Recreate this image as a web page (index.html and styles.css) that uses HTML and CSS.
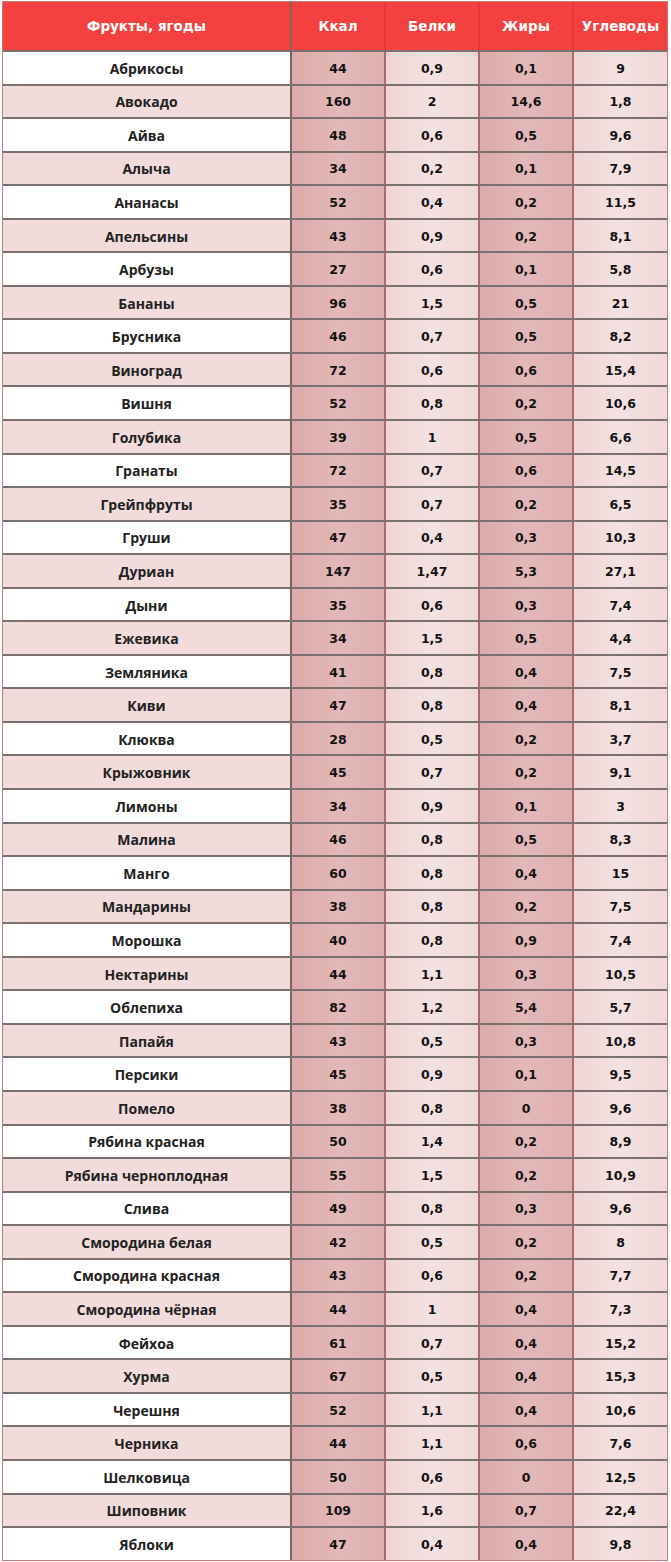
FILE: index.html
```html
<!DOCTYPE html>
<html lang="ru">
<head>
<meta charset="utf-8">
<title>Калорийность фруктов и ягод</title>
<link rel="stylesheet" href="styles.css">
</head>
<body>
<div class="table">
  <div class="row head">
    <div class="cell name">Фрукты, ягоды</div>
    <div class="cell">Ккал</div>
    <div class="cell">Белки</div>
    <div class="cell">Жиры</div>
    <div class="cell">Углеводы</div>
  </div>
  <div class="row"><div class="cell name">Абрикосы</div><div class="cell dark">44</div><div class="cell light">0,9</div><div class="cell dark">0,1</div><div class="cell light">9</div></div>
  <div class="row"><div class="cell name">Авокадо</div><div class="cell dark">160</div><div class="cell light">2</div><div class="cell dark">14,6</div><div class="cell light">1,8</div></div>
  <div class="row"><div class="cell name">Айва</div><div class="cell dark">48</div><div class="cell light">0,6</div><div class="cell dark">0,5</div><div class="cell light">9,6</div></div>
  <div class="row"><div class="cell name">Алыча</div><div class="cell dark">34</div><div class="cell light">0,2</div><div class="cell dark">0,1</div><div class="cell light">7,9</div></div>
  <div class="row"><div class="cell name">Ананасы</div><div class="cell dark">52</div><div class="cell light">0,4</div><div class="cell dark">0,2</div><div class="cell light">11,5</div></div>
  <div class="row"><div class="cell name">Апельсины</div><div class="cell dark">43</div><div class="cell light">0,9</div><div class="cell dark">0,2</div><div class="cell light">8,1</div></div>
  <div class="row"><div class="cell name">Арбузы</div><div class="cell dark">27</div><div class="cell light">0,6</div><div class="cell dark">0,1</div><div class="cell light">5,8</div></div>
  <div class="row"><div class="cell name">Бананы</div><div class="cell dark">96</div><div class="cell light">1,5</div><div class="cell dark">0,5</div><div class="cell light">21</div></div>
  <div class="row"><div class="cell name">Брусника</div><div class="cell dark">46</div><div class="cell light">0,7</div><div class="cell dark">0,5</div><div class="cell light">8,2</div></div>
  <div class="row"><div class="cell name">Виноград</div><div class="cell dark">72</div><div class="cell light">0,6</div><div class="cell dark">0,6</div><div class="cell light">15,4</div></div>
  <div class="row"><div class="cell name">Вишня</div><div class="cell dark">52</div><div class="cell light">0,8</div><div class="cell dark">0,2</div><div class="cell light">10,6</div></div>
  <div class="row"><div class="cell name">Голубика</div><div class="cell dark">39</div><div class="cell light">1</div><div class="cell dark">0,5</div><div class="cell light">6,6</div></div>
  <div class="row"><div class="cell name">Гранаты</div><div class="cell dark">72</div><div class="cell light">0,7</div><div class="cell dark">0,6</div><div class="cell light">14,5</div></div>
  <div class="row"><div class="cell name">Грейпфруты</div><div class="cell dark">35</div><div class="cell light">0,7</div><div class="cell dark">0,2</div><div class="cell light">6,5</div></div>
  <div class="row"><div class="cell name">Груши</div><div class="cell dark">47</div><div class="cell light">0,4</div><div class="cell dark">0,3</div><div class="cell light">10,3</div></div>
  <div class="row"><div class="cell name">Дуриан</div><div class="cell dark">147</div><div class="cell light">1,47</div><div class="cell dark">5,3</div><div class="cell light">27,1</div></div>
  <div class="row"><div class="cell name">Дыни</div><div class="cell dark">35</div><div class="cell light">0,6</div><div class="cell dark">0,3</div><div class="cell light">7,4</div></div>
  <div class="row"><div class="cell name">Ежевика</div><div class="cell dark">34</div><div class="cell light">1,5</div><div class="cell dark">0,5</div><div class="cell light">4,4</div></div>
  <div class="row"><div class="cell name">Земляника</div><div class="cell dark">41</div><div class="cell light">0,8</div><div class="cell dark">0,4</div><div class="cell light">7,5</div></div>
  <div class="row"><div class="cell name">Киви</div><div class="cell dark">47</div><div class="cell light">0,8</div><div class="cell dark">0,4</div><div class="cell light">8,1</div></div>
  <div class="row"><div class="cell name">Клюква</div><div class="cell dark">28</div><div class="cell light">0,5</div><div class="cell dark">0,2</div><div class="cell light">3,7</div></div>
  <div class="row"><div class="cell name">Крыжовник</div><div class="cell dark">45</div><div class="cell light">0,7</div><div class="cell dark">0,2</div><div class="cell light">9,1</div></div>
  <div class="row"><div class="cell name">Лимоны</div><div class="cell dark">34</div><div class="cell light">0,9</div><div class="cell dark">0,1</div><div class="cell light">3</div></div>
  <div class="row"><div class="cell name">Малина</div><div class="cell dark">46</div><div class="cell light">0,8</div><div class="cell dark">0,5</div><div class="cell light">8,3</div></div>
  <div class="row"><div class="cell name">Манго</div><div class="cell dark">60</div><div class="cell light">0,8</div><div class="cell dark">0,4</div><div class="cell light">15</div></div>
  <div class="row"><div class="cell name">Мандарины</div><div class="cell dark">38</div><div class="cell light">0,8</div><div class="cell dark">0,2</div><div class="cell light">7,5</div></div>
  <div class="row"><div class="cell name">Морошка</div><div class="cell dark">40</div><div class="cell light">0,8</div><div class="cell dark">0,9</div><div class="cell light">7,4</div></div>
  <div class="row"><div class="cell name">Нектарины</div><div class="cell dark">44</div><div class="cell light">1,1</div><div class="cell dark">0,3</div><div class="cell light">10,5</div></div>
  <div class="row"><div class="cell name">Облепиха</div><div class="cell dark">82</div><div class="cell light">1,2</div><div class="cell dark">5,4</div><div class="cell light">5,7</div></div>
  <div class="row"><div class="cell name">Папайя</div><div class="cell dark">43</div><div class="cell light">0,5</div><div class="cell dark">0,3</div><div class="cell light">10,8</div></div>
  <div class="row"><div class="cell name">Персики</div><div class="cell dark">45</div><div class="cell light">0,9</div><div class="cell dark">0,1</div><div class="cell light">9,5</div></div>
  <div class="row"><div class="cell name">Помело</div><div class="cell dark">38</div><div class="cell light">0,8</div><div class="cell dark">0</div><div class="cell light">9,6</div></div>
  <div class="row"><div class="cell name">Рябина красная</div><div class="cell dark">50</div><div class="cell light">1,4</div><div class="cell dark">0,2</div><div class="cell light">8,9</div></div>
  <div class="row"><div class="cell name">Рябина черноплодная</div><div class="cell dark">55</div><div class="cell light">1,5</div><div class="cell dark">0,2</div><div class="cell light">10,9</div></div>
  <div class="row"><div class="cell name">Слива</div><div class="cell dark">49</div><div class="cell light">0,8</div><div class="cell dark">0,3</div><div class="cell light">9,6</div></div>
  <div class="row"><div class="cell name">Смородина белая</div><div class="cell dark">42</div><div class="cell light">0,5</div><div class="cell dark">0,2</div><div class="cell light">8</div></div>
  <div class="row"><div class="cell name">Смородина красная</div><div class="cell dark">43</div><div class="cell light">0,6</div><div class="cell dark">0,2</div><div class="cell light">7,7</div></div>
  <div class="row"><div class="cell name">Смородина чёрная</div><div class="cell dark">44</div><div class="cell light">1</div><div class="cell dark">0,4</div><div class="cell light">7,3</div></div>
  <div class="row"><div class="cell name">Фейхоа</div><div class="cell dark">61</div><div class="cell light">0,7</div><div class="cell dark">0,4</div><div class="cell light">15,2</div></div>
  <div class="row"><div class="cell name">Хурма</div><div class="cell dark">67</div><div class="cell light">0,5</div><div class="cell dark">0,4</div><div class="cell light">15,3</div></div>
  <div class="row"><div class="cell name">Черешня</div><div class="cell dark">52</div><div class="cell light">1,1</div><div class="cell dark">0,4</div><div class="cell light">10,6</div></div>
  <div class="row"><div class="cell name">Черника</div><div class="cell dark">44</div><div class="cell light">1,1</div><div class="cell dark">0,6</div><div class="cell light">7,6</div></div>
  <div class="row"><div class="cell name">Шелковица</div><div class="cell dark">50</div><div class="cell light">0,6</div><div class="cell dark">0</div><div class="cell light">12,5</div></div>
  <div class="row"><div class="cell name">Шиповник</div><div class="cell dark">109</div><div class="cell light">1,6</div><div class="cell dark">0,7</div><div class="cell light">22,4</div></div>
  <div class="row"><div class="cell name">Яблоки</div><div class="cell dark">47</div><div class="cell light">0,4</div><div class="cell dark">0,4</div><div class="cell light">9,8</div></div>
</div>
</body>
</html>
```

FILE: styles.css
```css
html, body {
  margin: 0;
  padding: 0;
  background: #ffffff;
}

.table {
  margin: 1px 0 0 2px;
  width: 666px;
  box-sizing: border-box;
  border: 1px solid #c27c7c;
  display: flex;
  flex-direction: column;
}

.row {
  display: grid;
  grid-template-columns: 287px 94px 94px 94px 95px;
  height: 33.556px;
  box-sizing: border-box;
  border-top: 2px solid #7a7070;
}

.row.head {
  height: 48px;
  border-top: none;
  background: #f4403e;
}

.cell {
  display: flex;
  align-items: center;
  justify-content: center;
  box-sizing: border-box;
  border-left: 2px solid #a86a6a;
  font-family: "DejaVu Sans", "Liberation Sans", sans-serif;
  font-weight: bold;
  font-size: 12.5px;
  color: #141212;
  padding-top: 1px;
}

.cell.name {
  border-left: none;
  font-family: "Open Sans", "Liberation Sans", sans-serif;
  font-size: 14px;
  font-weight: 700;
  color: #222222;
  background: #ffffff;
}

.row:nth-child(odd) .cell.name {
  background: #f1dbdb;
}

.row .cell.name + .cell {
  border-left-color: #7e6262;
}

.head .cell,
.row.head .cell.name {
  background: #f4403e;
  color: #ffffff;
  font-family: "DejaVu Sans", "Liberation Sans", sans-serif;
  font-size: 13.5px;
  font-weight: bold;
  border-left: 2px solid #e03a38;
  padding-top: 0;
}

.row.head .cell.name {
  border-left: none;
}

.cell.dark {
  background: linear-gradient(90deg, #dcaaaa 0%, #e3b8b8 50%, #dfb0b0 100%);
}

.cell.light {
  background: linear-gradient(90deg, #efd5d5 0%, #f4e1e1 50%, #f0d8d8 100%);
}
```
